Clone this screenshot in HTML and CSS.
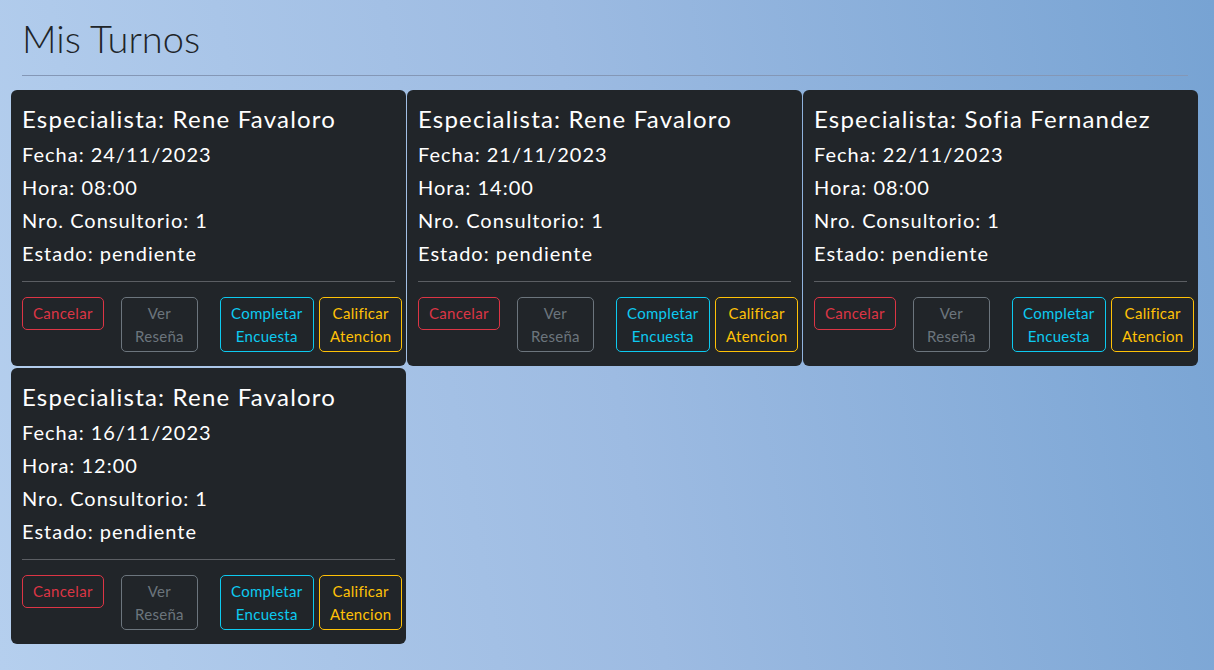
FILE: index.html
```html
<!DOCTYPE html>
<html lang="es">
<head>
<meta charset="utf-8">
<title>Mis Turnos</title>
<link rel="stylesheet" href="styles.css">
</head>
<body>
<header class="page-head">
  <h1 class="page-title">Mis Turnos</h1>
  <hr class="page-rule">
</header>
<main class="cards">
  <article class="card">
    <h4 class="card-title">Especialista: Rene Favaloro</h4>
    <p class="card-line">Fecha: 24/11/2023</p>
    <p class="card-line">Hora: 08:00</p>
    <p class="card-line">Nro. Consultorio: 1</p>
    <p class="card-line">Estado: pendiente</p>
    <hr class="card-rule">
    <div class="actions">
      <div class="col"><button class="btn btn-red">Cancelar</button></div>
      <div class="col"><button class="btn btn-gray">Ver<br>Reseña</button></div>
      <div class="col"><button class="btn btn-cyan">Completar<br>Encuesta</button></div>
      <div class="col"><button class="btn btn-yellow">Calificar<br>Atencion</button></div>
    </div>
  </article>
  <article class="card">
    <h4 class="card-title">Especialista: Rene Favaloro</h4>
    <p class="card-line">Fecha: 21/11/2023</p>
    <p class="card-line">Hora: 14:00</p>
    <p class="card-line">Nro. Consultorio: 1</p>
    <p class="card-line">Estado: pendiente</p>
    <hr class="card-rule">
    <div class="actions">
      <div class="col"><button class="btn btn-red">Cancelar</button></div>
      <div class="col"><button class="btn btn-gray">Ver<br>Reseña</button></div>
      <div class="col"><button class="btn btn-cyan">Completar<br>Encuesta</button></div>
      <div class="col"><button class="btn btn-yellow">Calificar<br>Atencion</button></div>
    </div>
  </article>
  <article class="card">
    <h4 class="card-title">Especialista: Sofia Fernandez</h4>
    <p class="card-line">Fecha: 22/11/2023</p>
    <p class="card-line">Hora: 08:00</p>
    <p class="card-line">Nro. Consultorio: 1</p>
    <p class="card-line">Estado: pendiente</p>
    <hr class="card-rule">
    <div class="actions">
      <div class="col"><button class="btn btn-red">Cancelar</button></div>
      <div class="col"><button class="btn btn-gray">Ver<br>Reseña</button></div>
      <div class="col"><button class="btn btn-cyan">Completar<br>Encuesta</button></div>
      <div class="col"><button class="btn btn-yellow">Calificar<br>Atencion</button></div>
    </div>
  </article>
  <article class="card">
    <h4 class="card-title">Especialista: Rene Favaloro</h4>
    <p class="card-line">Fecha: 16/11/2023</p>
    <p class="card-line">Hora: 12:00</p>
    <p class="card-line">Nro. Consultorio: 1</p>
    <p class="card-line">Estado: pendiente</p>
    <hr class="card-rule">
    <div class="actions">
      <div class="col"><button class="btn btn-red">Cancelar</button></div>
      <div class="col"><button class="btn btn-gray">Ver<br>Reseña</button></div>
      <div class="col"><button class="btn btn-cyan">Completar<br>Encuesta</button></div>
      <div class="col"><button class="btn btn-yellow">Calificar<br>Atencion</button></div>
    </div>
  </article>
</main>
</body>
</html>
```

FILE: styles.css
```css
* { box-sizing: border-box; }

html, body {
  margin: 0;
  height: 100%;
}

body {
  font-family: "Lato", "Open Sans", sans-serif;
  background: linear-gradient(80deg, #b5cfee 0%, #9dbbe2 50%, #77a3d3 100%);
  color: #212529;
  overflow: hidden;
}

.page-head {
  padding: 14px 26px 0 22px;
}

.page-title {
  margin: 0;
  font-size: 38px;
  line-height: 48px;
  font-weight: 300;
  color: #212529;
}

.page-rule {
  margin: 13px 0 14px;
  border: 0;
  border-top: 1px solid #8497b6;
}

.cards {
  display: grid;
  grid-template-columns: repeat(3, 395px);
  column-gap: 1px;
  row-gap: 2px;
  padding-left: 11px;
}

.card {
  background: #212529;
  border-radius: 6px;
  padding: 14px 11px 13px;
  color: #ffffff;
  height: 276px;
}

.card-title {
  margin: 0 0 9px;
  font-size: 24px;
  line-height: 29px;
  font-weight: 400;
  letter-spacing: 0.05em;
}

.card-line {
  margin: 0 0 8px;
  font-size: 20px;
  line-height: 25px;
  letter-spacing: 0.05em;
}

.card-line:last-of-type {
  margin-bottom: 0;
}

.card-rule {
  margin: 15px 0 15px;
  border: 0;
  border-top: 1px solid #5b5e63;
}

.actions {
  display: grid;
  grid-template-columns: repeat(4, 99px);
  align-items: start;
}

.col {
  display: flex;
  justify-content: flex-start;
}

.btn {
  font-family: inherit;
  font-size: 15px;
  line-height: 22.5px;
  padding: 4px 10px;
  letter-spacing: 0.02em;
  background: transparent;
  border: 1px solid currentColor;
  border-radius: 5px;
  text-align: center;
}

.btn-red { color: #dc3545; }
.btn-gray { color: #6c757d; padding: 4px 13px; }
.btn-cyan { color: #0dcaf0; }
.btn-yellow { color: #ffc107; }
```
